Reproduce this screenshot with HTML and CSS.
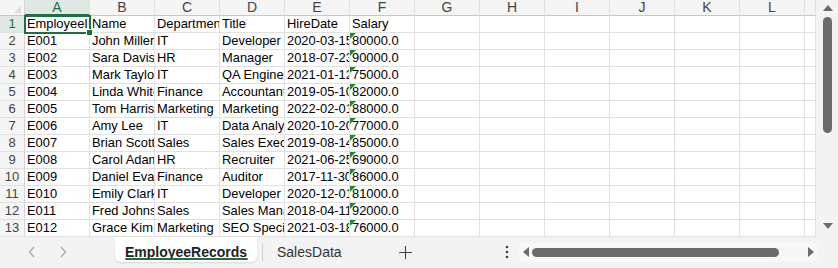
FILE: index.html
```html
<!DOCTYPE html>
<html>
<head>
<meta charset="utf-8">
<link rel="stylesheet" href="styles.css">
</head>
<body>
<div class="app">
  <div class="main">
    <div class="sheet">
      <div class="grid">
        <div class="corner"><span class="tri"></span></div>
        <div class="ch sel">A</div><div class="ch">B</div><div class="ch">C</div><div class="ch">D</div><div class="ch">E</div><div class="ch">F</div><div class="ch">G</div><div class="ch">H</div><div class="ch">I</div><div class="ch">J</div><div class="ch">K</div><div class="ch">L</div><div class="ch"></div>

        <div class="rh sel">1</div><div class="c">EmployeeID</div><div class="c">Name</div><div class="c">Department</div><div class="c">Title</div><div class="c">HireDate</div><div class="c">Salary</div><div class="c"></div><div class="c"></div><div class="c"></div><div class="c"></div><div class="c"></div><div class="c"></div><div class="c"></div>

        <div class="rh">2</div><div class="c">E001</div><div class="c">John Miller</div><div class="c">IT</div><div class="c">Developer</div><div class="c">2020-03-15</div><div class="c n">80000.0</div><div class="c"></div><div class="c"></div><div class="c"></div><div class="c"></div><div class="c"></div><div class="c"></div><div class="c"></div>

        <div class="rh">3</div><div class="c">E002</div><div class="c">Sara Davis</div><div class="c">HR</div><div class="c">Manager</div><div class="c">2018-07-23</div><div class="c n">90000.0</div><div class="c"></div><div class="c"></div><div class="c"></div><div class="c"></div><div class="c"></div><div class="c"></div><div class="c"></div>

        <div class="rh">4</div><div class="c">E003</div><div class="c">Mark Taylor</div><div class="c">IT</div><div class="c">QA Engineer</div><div class="c">2021-01-12</div><div class="c n">75000.0</div><div class="c"></div><div class="c"></div><div class="c"></div><div class="c"></div><div class="c"></div><div class="c"></div><div class="c"></div>

        <div class="rh">5</div><div class="c">E004</div><div class="c">Linda White</div><div class="c">Finance</div><div class="c">Accountant</div><div class="c">2019-05-10</div><div class="c n">82000.0</div><div class="c"></div><div class="c"></div><div class="c"></div><div class="c"></div><div class="c"></div><div class="c"></div><div class="c"></div>

        <div class="rh">6</div><div class="c">E005</div><div class="c">Tom Harris</div><div class="c">Marketing</div><div class="c">Marketing</div><div class="c">2022-02-01</div><div class="c n">88000.0</div><div class="c"></div><div class="c"></div><div class="c"></div><div class="c"></div><div class="c"></div><div class="c"></div><div class="c"></div>

        <div class="rh">7</div><div class="c">E006</div><div class="c">Amy Lee</div><div class="c">IT</div><div class="c">Data Analyst</div><div class="c">2020-10-20</div><div class="c n">77000.0</div><div class="c"></div><div class="c"></div><div class="c"></div><div class="c"></div><div class="c"></div><div class="c"></div><div class="c"></div>

        <div class="rh">8</div><div class="c">E007</div><div class="c">Brian Scott</div><div class="c">Sales</div><div class="c">Sales Executive</div><div class="c">2019-08-14</div><div class="c n">85000.0</div><div class="c"></div><div class="c"></div><div class="c"></div><div class="c"></div><div class="c"></div><div class="c"></div><div class="c"></div>

        <div class="rh">9</div><div class="c">E008</div><div class="c">Carol Adams</div><div class="c">HR</div><div class="c">Recruiter</div><div class="c">2021-06-25</div><div class="c n">69000.0</div><div class="c"></div><div class="c"></div><div class="c"></div><div class="c"></div><div class="c"></div><div class="c"></div><div class="c"></div>

        <div class="rh">10</div><div class="c">E009</div><div class="c">Daniel Evans</div><div class="c">Finance</div><div class="c">Auditor</div><div class="c">2017-11-30</div><div class="c n">86000.0</div><div class="c"></div><div class="c"></div><div class="c"></div><div class="c"></div><div class="c"></div><div class="c"></div><div class="c"></div>

        <div class="rh">11</div><div class="c">E010</div><div class="c">Emily Clark</div><div class="c">IT</div><div class="c">Developer</div><div class="c">2020-12-01</div><div class="c n">81000.0</div><div class="c"></div><div class="c"></div><div class="c"></div><div class="c"></div><div class="c"></div><div class="c"></div><div class="c"></div>

        <div class="rh">12</div><div class="c">E011</div><div class="c">Fred Johnson</div><div class="c">Sales</div><div class="c">Sales Manager</div><div class="c">2018-04-11</div><div class="c n">92000.0</div><div class="c"></div><div class="c"></div><div class="c"></div><div class="c"></div><div class="c"></div><div class="c"></div><div class="c"></div>

        <div class="rh">13</div><div class="c">E012</div><div class="c">Grace Kim</div><div class="c">Marketing</div><div class="c">SEO Specialist</div><div class="c">2021-03-18</div><div class="c n">76000.0</div><div class="c"></div><div class="c"></div><div class="c"></div><div class="c"></div><div class="c"></div><div class="c"></div><div class="c"></div>
      </div>
      <div class="cursor"><span class="handle"></span></div>
    </div>
    <div class="vscroll">
      <svg class="varrow" width="10" height="6" viewBox="0 0 10 6"><path d="M0 6 L5 0 L10 6 Z" fill="#6b6b6b"/></svg>
      <div class="vthumb"></div>
      <div class="vspace"></div>
      <svg class="varrow" width="10" height="6" viewBox="0 0 10 6"><path d="M0 0 L5 6 L10 0 Z" fill="#6b6b6b"/></svg>
    </div>
  </div>
  <div class="bottom">
    <div class="nav">
      <svg width="8" height="12" viewBox="0 0 8 12"><path d="M6 1 L1.5 6 L6 11" fill="none" stroke="#a6a6a6" stroke-width="1.2"/></svg>
      <svg width="8" height="12" viewBox="0 0 8 12"><path d="M2 1 L6.5 6 L2 11" fill="none" stroke="#a6a6a6" stroke-width="1.2"/></svg>
    </div>
    <div class="tab active">EmployeeRecords</div>
    <div class="tabsep"></div>
    <div class="tab">SalesData</div>
    <div class="add">
      <svg width="13" height="13" viewBox="0 0 13 13"><path d="M6.5 0 V13 M0 6.5 H13" stroke="#444" stroke-width="1.1"/></svg>
    </div>
    <div class="more">
      <svg width="4" height="14" viewBox="0 0 4 14"><circle cx="2" cy="2" r="1.3" fill="#444"/><circle cx="2" cy="7" r="1.3" fill="#444"/><circle cx="2" cy="12" r="1.3" fill="#444"/></svg>
    </div>
    <div class="hscroll">
      <svg width="6" height="10" viewBox="0 0 6 10"><path d="M6 0 L0 5 L6 10 Z" fill="#6b6b6b"/></svg>
      <div class="hthumb"></div>
      <div class="hspace"></div>
      <svg width="6" height="10" viewBox="0 0 6 10"><path d="M0 0 L6 5 L0 10 Z" fill="#6b6b6b"/></svg>
    </div>
  </div>
</div>
</body>
</html>
```

FILE: styles.css
```css
html, body {
  margin: 0;
  padding: 0;
  width: 838px;
  height: 268px;
  overflow: hidden;
  background: #f3f3f3;
  font-family: "Liberation Sans", Arial, sans-serif;
}

.app {
  display: flex;
  flex-direction: column;
  width: 838px;
  height: 268px;
}

.main {
  display: flex;
  height: 237px;
}

.sheet {
  position: relative;
  width: 816px;
  height: 237px;
  background: #fff;
  overflow: hidden;
}

.grid {
  display: grid;
  grid-template-columns: 25px repeat(12, 65px) 11px;
  grid-template-rows: 16px repeat(13, 17px);
}

.grid > div {
  box-sizing: border-box;
  border-right: 1px solid #e1e1e1;
  border-bottom: 1px solid #e1e1e1;
  overflow: hidden;
  white-space: nowrap;
}

.corner {
  position: relative;
  background: #f5f5f5;
  border-bottom-color: #c8c8c8 !important;
  border-right-color: #d4d4d4 !important;
}

.tri {
  position: absolute;
  right: 3px;
  bottom: 2px;
  width: 0;
  height: 0;
  border-left: 7px solid transparent;
  border-bottom: 7px solid #dcdcdc;
}

.ch {
  background: #f5f5f5;
  border-bottom-color: #c8c8c8 !important;
  color: #444;
  font-size: 14px;
  line-height: 15px;
  text-align: center;
}

.ch.sel {
  background: #dfe9e3;
  color: #1e6e42;
  border-bottom: 2px solid #1e6e42 !important;
  line-height: 14px;
}

.rh {
  background: #f5f5f5;
  border-right-color: #d4d4d4 !important;
  color: #444;
  font-size: 13px;
  line-height: 16px;
  text-align: center;
}

.rh.sel {
  background: #dfe9e3;
  color: #1e6e42;
}

.c {
  color: #000;
  font-size: 12.9px;
  line-height: 16px;
  padding-left: 2px;
}

.n {
  position: relative;
}

.n::before {
  content: "";
  position: absolute;
  left: 0;
  top: 0;
  width: 0;
  height: 0;
  border-top: 6px solid #1b8a33;
  border-right: 6px solid transparent;
}

.cursor {
  position: absolute;
  left: 24px;
  top: 15px;
  width: 63px;
  height: 15px;
  border: 2px solid #1e6e42;
}

.handle {
  position: absolute;
  right: -4px;
  bottom: -4px;
  width: 5px;
  height: 5px;
  background: #1e6e42;
  border: 1px solid #fff;
}

.vscroll {
  width: 22px;
  display: flex;
  flex-direction: column;
  align-items: center;
  padding-top: 5px;
  box-sizing: border-box;
  background: #f3f3f3;
}

.varrow {
  display: block;
  margin-left: 1px;
}

.vthumb {
  width: 9px;
  height: 116px;
  margin-top: 6px;
  margin-left: 1px;
  background: #6b6b6b;
  border-radius: 5px;
}

.vspace {
  flex: 1;
  max-height: 90px;
}

.bottom {
  position: relative;
  display: flex;
  align-items: flex-start;
  height: 31px;
  background: #f3f3f3;
}

.nav {
  display: flex;
  gap: 23px;
  padding-left: 28px;
  padding-top: 9px;
  width: 87px;
  box-sizing: border-box;
}

.tab {
  font-size: 14px;
  color: #333;
  line-height: 16px;
  padding-top: 7px;
}

.tab.active {
  position: relative;
  background: #fff;
  width: 142px;
  height: 25px;
  box-sizing: border-box;
  text-align: center;
  font-weight: bold;
  color: #222;
  border-radius: 0 0 6px 6px;
  box-shadow: 0 1px 2px rgba(0,0,0,0.12);
  margin-left: 28px;
}

.tab.active::after {
  content: "";
  position: absolute;
  left: 10px;
  right: 9px;
  top: 21px;
  height: 2px;
  background: #1e6e42;
  border-radius: 1px;
}

.tabsep {
  width: 1px;
  height: 18px;
  margin-top: 6px;
  margin-left: 5px;
  margin-right: 14px;
  background: #cfcfcf;
}

.add {
  margin-left: 57px;
  padding-top: 8px;
}

.more {
  margin-left: 93px;
  padding-top: 8px;
}

.hscroll {
  display: flex;
  align-items: center;
  width: 300px;
  height: 20px;
  margin-left: 10px;
  margin-top: 5px;
  padding-left: 4px;
  padding-right: 5px;
  box-sizing: border-box;
  background: #f7f7f7;
}

.hthumb {
  width: 247px;
  height: 9px;
  margin-left: 3px;
  background: #6b6b6b;
  border-radius: 5px;
}

.hspace {
  flex: 1;
}
```
